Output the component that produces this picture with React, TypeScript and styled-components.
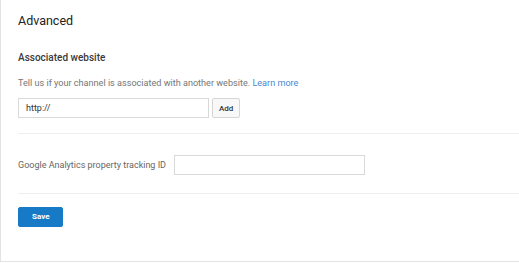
import React from "react"
import styled, { createGlobalStyle } from 'styled-components'

const GlobalStyle = createGlobalStyle`
  html, body {
    margin: 0;
    padding: 0;
    background: #ffffff;
  }
  body {
    font-family: Roboto, "Liberation Sans", Arial, sans-serif;
  }
`;

const Panel = styled.div`
  box-sizing: border-box;
  width: 100%;
  height: 262px;
  background: #fff;
  border-left: 1px solid #e3e3e3;
  border-bottom: 1px solid #e3e3e3;
  padding: 12px 0 0 17px;
`;

const Title = styled.h2`
  margin: 0;
  font-size: 12.5px;
  font-weight: 400;
  color: #222;
  line-height: 17px;
`;

const Section = styled.div`
  padding: 22px 0 15px 0;
  border-bottom: 1px solid #eeeeee;
`;

const SectionTitle = styled.h3`
  margin: 0;
  font-size: 10px;
  font-weight: 500;
  color: #3a3a3a;
  line-height: 14px;
`;

const HelpText = styled.p`
  margin: 12px 0 0 0;
  font-size: 9.1px;
  color: #767676;
  line-height: 12px;
`;

const Link = styled.a`
  color: #4a86d4;
  text-decoration: none;
`;

const Row = styled.div`
  display: flex;
  align-items: center;
  gap: 3px;
  margin-top: 9px;
`;

const TextInput = styled.input<{ w: number }>`
  box-sizing: border-box;
  width: ${(p) => p.w}px;
  height: 20px;
  border: 1px solid #d9d9d9;
  border-radius: 0;
  padding: 0 7px;
  font-family: Roboto, "Liberation Sans", Arial, sans-serif;
  font-size: 9px;
  color: #333;
  outline: none;
`;

const Button = styled.button<{ primary?: boolean }>`
  box-sizing: border-box;
  height: 20px;
  padding: 0 ${(p) => (p.primary ? 13 : 6)}px;
  border-radius: 2px;
  border: 1px solid ${(p) => (p.primary ? '#167ac6' : '#d6d6d6')};
  background: ${(p) => (p.primary ? '#167ac6' : '#f8f8f8')};
  color: ${(p) => (p.primary ? '#fff' : '#333')};
  font-family: Roboto, "Liberation Sans", Arial, sans-serif;
  font-size: 8px;
  font-weight: ${(p) => (p.primary ? 700 : 500)};
  cursor: pointer;
`;

const FieldRow = styled.div`
  display: flex;
  align-items: center;
  gap: 8px;
  padding: 21px 0 18px 0;
  border-bottom: 1px solid #eeeeee;
`;

const Label = styled.label`
  font-size: 9px;
  color: #666;
`;

const Footer = styled.div`
  padding-top: 10px;
`;

export default function App() {
  return (
    <>
      <GlobalStyle />
      <Panel>
        <Title>Advanced</Title>
        <Section>
          <SectionTitle>Associated website</SectionTitle>
          <HelpText>
            Tell us if your channel is associated with another website. <Link href="#">Learn more</Link>
          </HelpText>
          <Row>
            <TextInput w={191} defaultValue="http://" />
            <Button>Add</Button>
          </Row>
        </Section>
        <FieldRow>
          <Label>Google Analytics property tracking ID</Label>
          <TextInput w={191} />
        </FieldRow>
        <Footer>
          <Button primary>Save</Button>
        </Footer>
      </Panel>
    </>
  )
}
